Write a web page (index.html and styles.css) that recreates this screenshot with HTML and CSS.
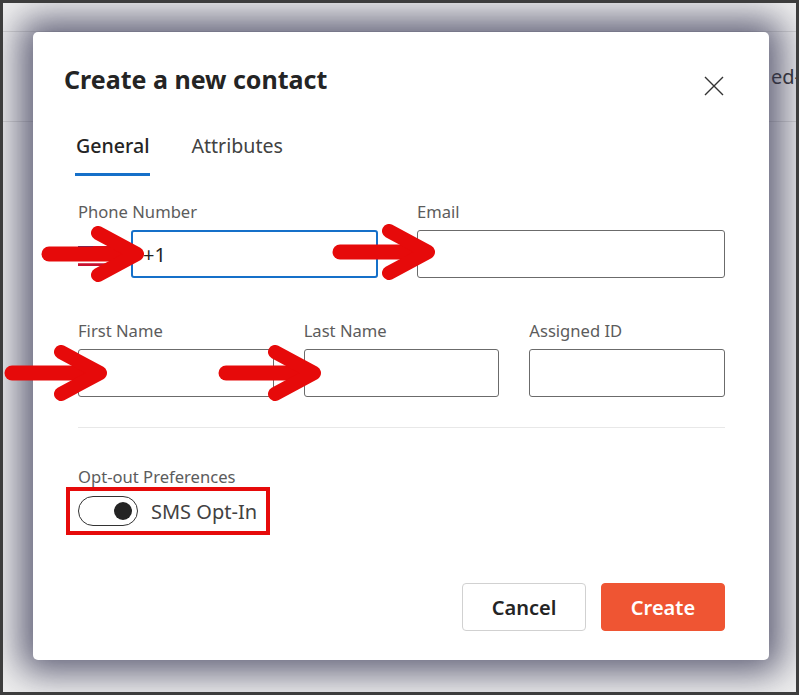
FILE: index.html
```html
<!doctype html>
<html>
<head>
<meta charset="utf-8">
<title>Create a new contact</title>
<link rel="stylesheet" href="styles.css">
</head>
<body>
<div class="screen">
	<div class="app">
		<div class="app-top"></div>
		<div class="app-row"><span class="app-cell">ed-C</span></div>
	</div>

	<div class="backdrop">
		<div class="dialog">
			<div class="dialog-head">
				<h2>Create a new contact</h2>
				<button class="close" type="button">
					<svg width="20" height="20" viewBox="0 0 20 20"><path d="M1 1L19 19M19 1L1 19" stroke="#333" stroke-width="1.4" fill="none"/></svg>
				</button>
			</div>
			<div class="tabs">
				<span class="tab active">General</span>
				<span class="tab">Attributes</span>
			</div>
			<div class="dialog-body">
				<div class="row row-two">
					<div class="field">
						<label>Phone Number</label>
						<div class="phone">
							<span class="flag">
								<svg width="32" height="20" viewBox="0 0 32 20">
									<rect width="32" height="20" fill="#fff"/>
									<path d="M0 1.5H32M0 7.2H32M0 12.9H32M0 18.6H32" stroke="#c8102e" stroke-width="2.8"/>
									<rect width="15" height="10" fill="#2b3e8c"/>
								</svg>
							</span>
							<input class="input focused" type="text" value="+1">
						</div>
					</div>
					<div class="field">
						<label>Email</label>
						<input class="input" type="text">
					</div>
				</div>
				<div class="row row-three">
					<div class="field">
						<label>First Name</label>
						<input class="input" type="text">
					</div>
					<div class="field">
						<label>Last Name</label>
						<input class="input" type="text">
					</div>
					<div class="field">
						<label>Assigned ID</label>
						<input class="input" type="text">
					</div>
				</div>
				<div class="divider"></div>
				<div class="prefs">
					<label>Opt-out Preferences</label>
					<div class="switch-row">
						<span class="switch"><span class="knob"></span></span>
						<span class="switch-label">SMS Opt-In</span>
					</div>
				</div>
				<div class="footer">
					<button class="btn" type="button">Cancel</button>
					<button class="btn primary" type="button">Create</button>
				</div>
			</div>
		</div>
	</div>

	<!-- annotations -->
	<svg class="arrow arrow-1" width="110" height="56" viewBox="0 0 110 56"><path d="M8 28H90" stroke-width="15"/><path d="M57 7L96 28L57 49" stroke-width="14"/></svg>
	<svg class="arrow arrow-2" width="110" height="56" viewBox="0 0 110 56"><path d="M8 28H90" stroke-width="15"/><path d="M57 7L96 28L57 49" stroke-width="14"/></svg>
	<svg class="arrow arrow-3" width="110" height="56" viewBox="0 0 110 56"><path d="M8 28H90" stroke-width="15"/><path d="M57 7L96 28L57 49" stroke-width="14"/></svg>
	<svg class="arrow arrow-4" width="110" height="56" viewBox="0 0 110 56"><path d="M8 28H90" stroke-width="15"/><path d="M57 7L96 28L57 49" stroke-width="14"/></svg>
	<div class="mark"></div>
</div>
</body>
</html>
```

FILE: styles.css
```css
body{
	margin:0;
}
.screen{
	width:799px;
	height:695px;
	box-sizing:border-box;
	border:3px solid #3d3d3d;
	background:#f0f0f0;
	position:relative;
	overflow:hidden;
	font-family:"Noto Sans","Open Sans",sans-serif;
	color:#242424;
}
/* page behind the dialog */
.app-top{
	height:28px;
	border-bottom:1px solid #d6d6d6;
}
.app-row{
	height:89px;
	border-bottom:1px solid #d6d6d6;
	display:flex;
	align-items:center;
	padding-left:768px;
	white-space:nowrap;
	font-size:20px;
	color:#333;
}
.backdrop{
	position:absolute;
	top:0;
	left:0;
	right:0;
	bottom:0;
	padding:29px 27px 32px 30px;
	display:flex;
}
.dialog{
	flex:1;
	background:#fff;
	border-radius:5px;
	box-shadow:0 0 36px 13px rgba(55,55,85,0.78);
	display:flex;
	flex-direction:column;
}
.dialog-head{
	display:flex;
	justify-content:space-between;
	align-items:flex-start;
	padding:31px 45px 0 31px;
}
.dialog-head h2{
	margin:0;
	font-size:25px;
	line-height:32px;
	font-weight:700;
	color:#242424;
}
.close{
	margin-top:13px;
	padding:0;
	border:0;
	background:none;
	width:20px;
	height:20px;
	display:block;
}
.close svg{
	display:block;
}
.tabs{
	display:flex;
	gap:40px;
	margin-top:36px;
	padding-left:42px;
}
.tab{
	font-size:19.6px;
	line-height:28px;
	padding:0 1px 13px;
	border-bottom:3px solid transparent;
	color:#424242;
}
.tab.active{
	font-weight:500;
	color:#242424;
	border-bottom-color:#1570c9;
}
.dialog-body{
	flex:1;
	display:flex;
	flex-direction:column;
	padding:0 44px 29px 45px;
}
.row{
	display:grid;
}
.row-two{
	grid-template-columns:300px 1fr;
	column-gap:39px;
	margin-top:25px;
}
.row-three{
	grid-template-columns:1fr 1fr 1fr;
	column-gap:30px;
	margin-top:42px;
}
.field label,
.prefs label{
	display:block;
	font-size:16.6px;
	line-height:22px;
	color:#5c5c5c;
	margin-bottom:7px;
}
.input{
	display:block;
	box-sizing:border-box;
	width:100%;
	height:48px;
	border:1px solid #6b6b6b;
	border-radius:3px;
	padding:0 10px;
	font-family:inherit;
	font-size:20px;
	color:#242424;
	outline:none;
}
.input.focused{
	border:2px solid #1570c9;
	padding-left:10px;
}
.phone{
	display:flex;
	align-items:center;
	gap:21px;
}
.flag{
	flex:none;
	width:32px;
	height:20px;
	margin-top:4px;
}
.flag svg{
	display:block;
}
.divider{
	height:1px;
	background:#e8e8e8;
	margin-top:30px;
}
.prefs{
	margin-top:38px;
}
.prefs label{
	margin-bottom:8px;
}
.switch-row{
	display:flex;
	align-items:center;
	gap:13px;
}
.switch{
	box-sizing:border-box;
	width:60px;
	height:30px;
	border:1px solid #333;
	border-radius:15px;
	display:flex;
	align-items:center;
	justify-content:flex-end;
	padding-right:5px;
}
.knob{
	width:18px;
	height:18px;
	border-radius:50%;
	background:#242424;
}
.switch-label{
	font-size:20px;
	color:#424242;
}
.footer{
	margin-top:auto;
	display:flex;
	justify-content:flex-end;
	gap:15px;
}
.btn{
	width:124px;
	height:48px;
	border:1px solid #d1d1d1;
	border-radius:4px;
	background:#fff;
	font-family:inherit;
	font-size:20px;
	font-weight:600;
	color:#242424;
}
.btn.primary{
	background:#ef5533;
	border-color:#ef5533;
	color:#fff;
}
/* red marks drawn over the screenshot */
.arrow{
	position:absolute;
	fill:none;
	stroke:#e60a0a;
	stroke-linecap:round;
	stroke-linejoin:round;
}
.arrow-1{
	left:38px;
	top:223px;
}
.arrow-2{
	left:329px;
	top:221px;
}
.arrow-3{
	left:1px;
	top:342px;
}
.arrow-4{
	left:215px;
	top:342px;
}
.mark{
	position:absolute;
	left:63px;
	top:484px;
	width:204px;
	height:48px;
	box-sizing:border-box;
	border:4px solid #e60a0a;
}
```
